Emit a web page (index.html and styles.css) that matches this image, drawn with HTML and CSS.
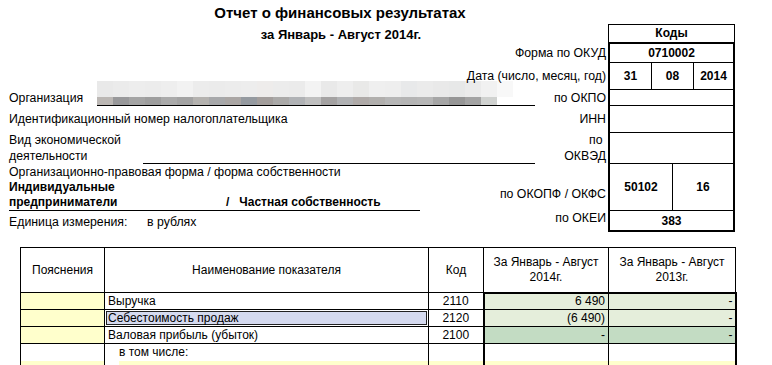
FILE: index.html
```html
<!DOCTYPE html>
<html lang="ru">
<head>
<meta charset="utf-8">
<title>Отчет о финансовых результатах</title>
<link rel="stylesheet" href="styles.css">
</head>
<body>
<div class="page">
  <h1 class="title">Отчет о финансовых результатах</h1>
  <div class="top">
    <div class="fields">
      <div class="row r-sub"><span>за Январь - Август 2014г.</span></div>
      <div class="row r-okud"><span class="lbl">Форма по ОКУД</span></div>
      <div class="org">
        <div class="blur"></div>
        <span class="org-date">Дата (число, месяц, год)</span>
        <span class="org-name">Организация</span>
        <span class="org-okpo">по ОКПО</span>
      </div>
      <div class="row r-inn"><span>Идентификационный номер налогоплательщика</span><span class="lbl">ИНН</span></div>
      <div class="row r-okved">
        <span class="okved-text">Вид экономической<br>деятельности</span>
        <span class="fill-line"></span>
        <span class="lbl">по&nbsp;<br>ОКВЭД</span>
      </div>
      <div class="row r-okopf">
        <div class="okopf-left">
          <div class="okopf-head">Организационно-правовая форма / форма собственности</div>
          <div class="okopf-val"><span class="ip">Индивидуальные<br>предприниматели</span><span>/</span><span class="own">Частная собственность</span></div>
        </div>
        <span class="lbl okopf-lbl">по ОКОПФ / ОКФС</span>
      </div>
      <div class="row r-okei"><span class="unit">Единица измерения:</span><span class="unit-val">в рублях</span><span class="lbl">по ОКЕИ</span></div>
    </div>
    <div class="codes">
      <div class="codes-head">Коды</div>
      <div class="codes-box">
        <div class="c c-okud">0710002</div>
        <div class="c c-date"><span class="cc">31</span><span class="cc">08</span><span class="cc last">2014</span></div>
        <div class="c c-okpo"></div>
        <div class="c c-inn"></div>
        <div class="c c-okved"></div>
        <div class="c c-okopf"><span class="cc">50102</span><span class="cc last">16</span></div>
        <div class="c c-okei">383</div>
      </div>
    </div>
  </div>
  <table class="report">
    <colgroup>
      <col class="w1"><col class="w2"><col class="w3"><col class="w4"><col class="w5">
    </colgroup>
    <thead>
      <tr>
        <th>Пояснения</th>
        <th>Наименование показателя</th>
        <th>Код</th>
        <th>За Январь - Август<br>2014г.</th>
        <th>За Январь - Август<br>2013г.</th>
      </tr>
    </thead>
    <tbody>
      <tr class="first">
        <td class="note"></td>
        <td class="name">Выручка</td>
        <td class="code">2110</td>
        <td class="v v1 light">6 490</td>
        <td class="v v2 light">-</td>
      </tr>
      <tr>
        <td class="note"></td>
        <td class="name sel">Себестоимость продаж</td>
        <td class="code">2120</td>
        <td class="v v1 light">(6 490)</td>
        <td class="v v2 light">-</td>
      </tr>
      <tr>
        <td class="note"></td>
        <td class="name">Валовая прибыль (убыток)</td>
        <td class="code">2100</td>
        <td class="v v1 dark">-</td>
        <td class="v v2 dark">-</td>
      </tr>
      <tr class="sub">
        <td></td>
        <td class="name indent">в том числе:</td>
        <td class="code"></td>
        <td class="v v1"></td>
        <td class="v v2"></td>
      </tr>
      <tr class="input">
        <td class="note"></td>
        <td class="name-in"><div class="in-fill"></div></td>
        <td class="note"></td>
        <td class="v v1 note"></td>
        <td class="v v2 note"></td>
      </tr>
    </tbody>
  </table>
</div>
</body>
</html>
```
FILE: styles.css
```css
* { box-sizing: border-box; }
body {
  margin: 0;
  background: #fff;
  font-family: "Liberation Sans", Arial, sans-serif;
  font-size: 12px;
  line-height: 15px;
  color: #000;
}
.page { width: 772px; height: 365px; overflow: hidden; }
.title {
  margin: 0;
  width: 680px;
  height: 24px;
  line-height: 26px;
  font-size: 15px;
  font-weight: bold;
  text-align: center;
}
.top { display: flex; padding-left: 9px; }
.fields { width: 597px; margin-right: 2px; font-size: 12.3px; }
.codes { width: 127px; }
.row { display: flex; align-items: center; white-space: nowrap; }
.lbl { margin-left: auto; text-align: right; }

.r-sub { height: 20px; padding-left: 67px; justify-content: center; font-weight: bold; font-size: 13px; }
.r-okud { height: 19px; }

.org {
  display: grid;
  grid-template-columns: 88px 438px 1fr;
  grid-template-rows: 27px 16px;
  height: 43px;
  white-space: nowrap;
}
.blur {
  grid-column: 2;
  grid-row: 1 / 3;
  align-self: end;
  height: 25px;
  border-bottom: 1px solid #000;
  background-image:
    linear-gradient(to right, #e9e9e9 0 16px, #ebebeb 16px 32px, #ededed 32px 48px, #ececec 48px 64px, #eeeeee 64px 80px, #f2f2f2 80px 96px, #ececec 96px 112px, #ebebeb 112px 128px, #ececec 128px 144px, #ededed 144px 160px, #eeeceb 160px 176px, #ececec 176px 192px, #ebebeb 192px 208px, #f3f3f3 208px 224px, #e9e9e9 224px 240px, #eeeeee 240px 256px, #e9e9e8 256px 272px, #efefef 272px 288px, #eeeeee 288px 304px, #e8e9ea 304px 320px, #ebebeb 320px 336px, #e9e9e9 336px 352px, #e7e8e8 352px 368px, #ebebeb 368px 384px, #f1f1f1 384px 400px, #f8f8f8 400px 416px),
    linear-gradient(to right, #bbb7b4 0 16px, #98989a 16px 32px, #a4a4a4 32px 48px, #9e9e9e 48px 64px, #aaaaaa 64px 80px, #a3a3a3 80px 96px, #b4b2af 96px 112px, #a7a8aa 112px 128px, #aaa6a4 128px 144px, #959aa0 144px 160px, #a39e9c 160px 176px, #aaa9a8 176px 192px, #b0b2b5 192px 208px, #bfbfbf 208px 224px, #a4a2a2 224px 240px, #b0b1b3 240px 256px, #afaaa8 256px 272px, #b1afad 272px 288px, #b6b6b6 288px 304px, #b4b4b4 304px 320px, #b6b6b6 320px 336px, #a6a6a6 336px 352px, #969696 352px 368px, #a3a3a3 368px 384px, #d0d2d0 384px 400px);
  background-size: 416px 16px, 400px 8px;
  background-position: 0 0, 0 16px;
  background-repeat: no-repeat;
}
.org-date { grid-column: 2 / 4; grid-row: 1; justify-self: end; align-self: center; }
.org-name { grid-column: 1; grid-row: 2; align-self: center; }
.org-okpo { grid-column: 3; grid-row: 2; justify-self: end; align-self: center; }

.r-inn { height: 27px; }

.r-okved { height: 31px; align-items: flex-end; line-height: 16px; }
.okved-text { width: 134px; }
.fill-line { width: 392px; align-self: stretch; border-bottom: 1px solid #000; }

.r-okopf { height: 47px; align-items: flex-end; }
.okopf-left { width: 411px; }
.okopf-head { line-height: 16px; }
.okopf-val {
  display: flex;
  align-items: flex-end;
  height: 31px;
  border-bottom: 1px solid #000;
  font-weight: bold;
  font-size: 12px;
  line-height: 15px;
}
.ip { width: 217px; }
.own { margin-left: 10px; }
.okopf-lbl { padding-bottom: 9px; }

.r-okei { height: 19px; align-items: flex-start; }
.unit { width: 138px; padding-top: 4px; }
.unit-val { padding-top: 4px; }

.codes-head {
  height: 18px;
  border: 1px solid #000;
  border-bottom: 0;
  text-align: center;
  font-weight: bold;
  line-height: 17px;
}
.codes-box { border: 2px solid #000; font-weight: bold; }
.c {
  display: flex;
  align-items: center;
  justify-content: center;
  border-bottom: 1px solid #000;
}
.c-okud { height: 19px; }
.c-date { height: 27px; display: grid; grid-template-columns: 42px 42px 1fr; }
.c-okpo { height: 16px; }
.c-inn { height: 27px; }
.c-okved { height: 31px; }
.c-okopf { height: 47px; display: grid; grid-template-columns: 63px 1fr; }
.c-okei { height: 19px; border-bottom: 0; padding-top: 2px; }
.cc {
  height: 100%;
  display: flex;
  align-items: center;
  justify-content: center;
  border-right: 1px solid #000;
}
.cc.last { border-right: 0; }

.report {
  margin: 15px 0 0 20px;
  border-collapse: collapse;
  table-layout: fixed;
  width: 715px;
}
.w1 { width: 84px; }
.w2 { width: 324px; }
.w3 { width: 55px; }
.w4 { width: 125px; }
.w5 { width: 127px; }
.report th {
  height: 45px;
  padding: 0;
  border: 1px solid #000;
  font-weight: normal;
  text-align: center;
  vertical-align: middle;
  line-height: 15px;
}
.report td {
  height: 17px;
  padding: 0;
  border: 1px solid #000;
  white-space: nowrap;
  line-height: 15px;
}
.note { background: #ffffcc; }
.report td.name { padding-left: 3px; }
.report td.indent { padding-left: 14px; }
.code { text-align: center; }
.report td.v { text-align: right; padding-right: 3px; }
.report td.v1 { border-left: 2px solid #000; }
.report td.v2 { border-right: 2px solid #000; padding-right: 2px; }
.report .first td.v { border-top: 2px solid #000; }
.light { background: #e5eedb; }
.dark { background: #c3dcc3; }
.sel {
  background: #d5daef;
  box-shadow: inset 0 0 0 1px #fff, inset 0 0 0 2px #222;
}
.report .sub td { border-bottom: 0; }
.report .input td { border-top: 0; }
.name-in { padding: 0; }
.in-fill { margin-left: 14px; height: 16px; background: #ffffcc; }
```
